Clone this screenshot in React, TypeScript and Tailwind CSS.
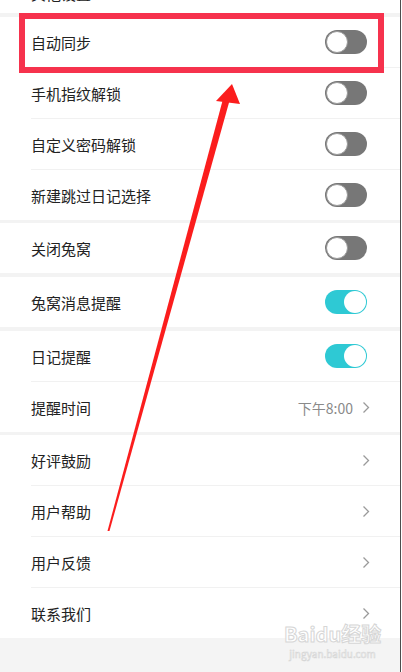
import React from "react";

type Item = {
  label: string;
  kind: "toggle" | "link";
  on?: boolean;
  value?: string;
};

const sections: Item[][] = [
  [
    { label: "自动同步", kind: "toggle", on: false },
    { label: "手机指纹解锁", kind: "toggle", on: false },
    { label: "自定义密码解锁", kind: "toggle", on: false },
    { label: "新建跳过日记选择", kind: "toggle", on: false },
  ],
  [{ label: "关闭兔窝", kind: "toggle", on: false }],
  [{ label: "兔窝消息提醒", kind: "toggle", on: true }],
  [
    { label: "日记提醒", kind: "toggle", on: true },
    { label: "提醒时间", kind: "link", value: "下午8:00" },
  ],
  [
    { label: "好评鼓励", kind: "link" },
    { label: "用户帮助", kind: "link" },
    { label: "用户反馈", kind: "link" },
    { label: "联系我们", kind: "link" },
  ],
];

// gap above each section
const gaps = ["h-[4px]", "h-[3px]", "h-[4px]", "h-[4px]", "h-[3px]"];

function Toggle({ on }: { on?: boolean }) {
  if (on) {
    return (
      <div className="flex h-[24px] w-[42px] items-center justify-end rounded-full bg-[#2ec9d4] px-px">
        <div className="h-[22px] w-[22px] rounded-full bg-white" />
      </div>
    );
  }
  return (
    <div className="flex h-[24px] w-[42px] items-center rounded-full bg-[#777777] px-px">
      <div className="h-[22px] w-[22px] rounded-full border border-[#9a9a9a] bg-white" />
    </div>
  );
}

function Chevron() {
  return (
    <svg width="8" height="13" viewBox="0 0 8 13" className="shrink-0">
      <polyline
        points="1.5,1.5 6.5,6.5 1.5,11.5"
        fill="none"
        stroke="#9a9a9a"
        strokeWidth="1.3"
      />
    </svg>
  );
}

function Row({ item }: { item: Item }) {
  return (
    <div
      className={`flex h-[50px] shrink-0 items-center justify-between pl-[31px] ${
        item.kind === "toggle" ? "pr-[33px]" : "pr-[30px]"
      }`}
    >
      <span className="pt-[2px] text-[15px] leading-[20px] text-[#222222]">
        {item.label}
      </span>
      {item.kind === "toggle" ? (
        <Toggle on={item.on} />
      ) : (
        <div className="flex items-center gap-[9px]">
          {item.value && (
            <span className="pt-[2px] text-[14px] leading-[18px] text-[#8a8a8a]">
              {item.value}
            </span>
          )}
          <Chevron />
        </div>
      )}
    </div>
  );
}

export default function App() {
  return (
    <div className="relative h-[672px] w-[402px] overflow-hidden bg-white font-['Noto_Sans_CJK_SC','Noto_Sans',sans-serif]">
      <div className="flex h-full">
        <div className="flex w-[400px] flex-col bg-white">
          <div className="h-[13px] shrink-0 overflow-hidden pl-[31px]">
            <div className="-mt-[16px] text-[15px] leading-[20px] text-[#222222]">
              其他设置
            </div>
          </div>
          {sections.map((items, i) => (
            <React.Fragment key={i}>
              <div className={`${gaps[i]} shrink-0 bg-[#f3f3f3]`} />
              {items.map((item, j) => (
                <React.Fragment key={item.label}>
                  {j > 0 && <div className="ml-[31px] h-px shrink-0 bg-[#f1f1f1]" />}
                  <Row item={item} />
                </React.Fragment>
              ))}
            </React.Fragment>
          ))}
          <div className="flex-1 bg-[#f4f4f4]" />
        </div>
        <div className="w-px bg-[#4d4d4d]" />
        <div className="w-px bg-white" />
      </div>

      {/* annotation box */}
      <div className="pointer-events-none absolute left-[19px] top-[13px] h-[60px] w-[365px] border-[6px] border-[#f6324d]" />

      {/* annotation arrow */}
      <svg
        className="pointer-events-none absolute left-0 top-0"
        width="402"
        height="672"
        viewBox="0 0 402 672"
      >
        <polygon points="107.5,531 109.5,531 230,99 223,99" fill="#fb1d1d" />
        <polygon points="232,84 216,101 240,104" fill="#fb1d1d" />
      </svg>

      {/* watermark */}
      <div className="pointer-events-none absolute left-[284px] top-[624px] flex flex-col items-center text-white">
        <span className="text-[20px] font-bold leading-[20px] [-webkit-text-stroke:1px_#d6d6d6]">
          Baidu经验
        </span>
        <span className="mt-[5px] text-[10px] leading-[10px] [-webkit-text-stroke:0.6px_#d6d6d6]">
          jingyan.baidu.com
        </span>
      </div>
    </div>
  );
}
